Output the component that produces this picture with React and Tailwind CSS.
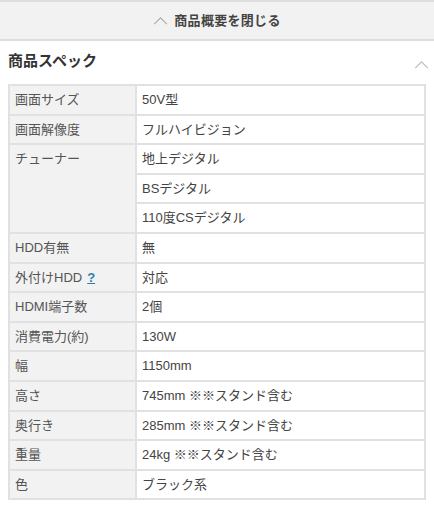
import React from 'react';

const rows = [
  { label: '画面サイズ', values: ['50V型'] },
  { label: '画面解像度', values: ['フルハイビジョン'] },
  { label: 'チューナー', values: ['地上デジタル', 'BSデジタル', '110度CSデジタル'] },
  { label: 'HDD有無', values: ['無'] },
  { label: '外付けHDD', values: ['対応'], help: true },
  { label: 'HDMI端子数', values: ['2個'] },
  { label: '消費電力(約)', values: ['130W'] },
  { label: '幅', values: ['1150mm'] },
  { label: '高さ', values: ['745mm ※※スタンド含む'] },
  { label: '奥行き', values: ['285mm ※※スタンド含む'] },
  { label: '重量', values: ['24kg ※※スタンド含む'] },
  { label: '色', values: ['ブラック系'] },
];

function ChevronUp({ className }) {
  return (
    <svg viewBox="0 0 16 10" className={className} fill="none" stroke="currentColor" strokeWidth="1.2">
      <path d="M1 9 L8 2 L15 9" />
    </svg>
  );
}

export default function App() {
  return (
    <div className="w-[434px] h-[512px] bg-white overflow-hidden text-[#444]" style={{ fontFamily: '"Liberation Sans", "Noto Sans CJK JP", sans-serif' }}>
      {/* 閉じるバー */}
      <div className="h-[41px] bg-[#f2f2f2] border-t-2 border-b-2 border-[#dedede] flex items-center justify-center gap-[6px]">
        <ChevronUp className="w-[15px] h-[9px] text-[#aaa]" />
        <span className="text-[13px] font-bold text-[#444] tracking-[0.3px]">商品概要を閉じる</span>
      </div>

      {/* 見出し */}
      <div className="flex items-center justify-between pl-2 pr-[5px] h-[43px]">
        <h2 className="text-[15px] font-bold text-[#333] mb-[2px]">商品スペック</h2>
        <ChevronUp className="w-[15px] h-[9px] text-[#bbb] mt-[4px]" />
      </div>

      {/* スペック表 */}
      <div className="px-2">
        <table className="w-full border-collapse text-[13px]">
          <tbody>
            {rows.map((r) =>
              r.values.map((v, i) => (
                <tr key={r.label + i} className="h-[29.6px]">
                  {i === 0 && (
                    <td rowSpan={r.values.length} className="w-[127px] align-top bg-[#f2f2f2] border-2 border-[#e1e1e1] pl-[5px] pt-[4px] text-[#555]">
                      {r.label}
                      {r.help && <span className="ml-[5px] text-[#2f7ea8] underline font-bold">?</span>}
                    </td>
                  )}
                  <td className="border-2 border-[#e1e1e1] pl-[5px] text-[#444]">{v}</td>
                </tr>
              ))
            )}
          </tbody>
        </table>
      </div>
    </div>
  );
}
